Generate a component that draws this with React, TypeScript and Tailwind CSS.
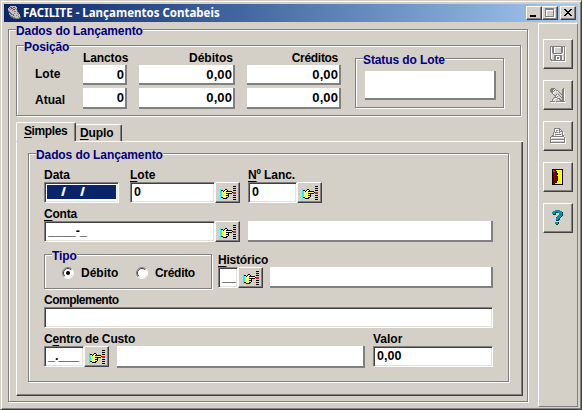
import React from "react";

const palette: Record<string, string> = {
  k: "#000000",
  g: "#808080",
  w: "#ffffff",
  y: "#ffff00",
  l: "#ffff80",
  c: "#00ffff",
  r: "#d02030",
  m: "#800000",
  t: "#0097a7",
  n: "#003c50",
  s: "#c0c0c0",
  d: "#5a5a60",
};

// Draws a bitmap icon, one unit square per character.
function PixelIcon({ rows, emboss = false }: { rows: string[]; emboss?: boolean }) {
  const w = Math.max(...rows.map((r) => r.length));
  const h = rows.length;
  const cells = (dx: number, fill?: string) =>
    rows.flatMap((row, y) =>
      row.split("").map((c, x) =>
        palette[c] ? (
          <rect key={`${dx}-${x}-${y}`} x={x + dx} y={y + dx} width={1} height={1} fill={fill ?? palette[c]} />
        ) : null,
      ),
    );
  return (
    <svg width={w + 1} height={h + 1} viewBox={`0 0 ${w + 1} ${h + 1}`} shapeRendering="crispEdges" className="block shrink-0">
      {emboss && cells(1, "#ffffff")}
      {cells(0)}
    </svg>
  );
}

const hand = [
  "             kkk",
  "                ",
  "             kkk",
  "c    kk         ",
  "ckk kllk     kkk",
  "cclkllkkkkkk    ",
  "cclyllyllllykrrr",
  "ccyllykkkkkk rrr",
  "cclyllylk       ",
  "ccyllykkk    kkk",
  "cclyllylk       ",
  "ckkyllkk     kkk",
  "c  kkkk         ",
  "             kkk",
];

const floppy = [
  "ggggggggggggggg",
  "g gg       gg g",
  "g gg       gg g",
  "g gg       gg g",
  "g gg       gg g",
  "g gg       gg g",
  "g gg       gg g",
  "g  ggggggggg  g",
  "g             g",
  "g   gggggggg  g",
  "g   gg    gg  g",
  "g   gg gg gg  g",
  "g   gg gg gg  g",
  "gg  gg    gg  g",
  " gggggggggggggg",
];

const erase = [
  " gggg        g ",
  "gggg g      gg ",
  "ggg g gg    gg ",
  "gggg    g   gg ",
  " gg      g  gg ",
  "  g       g gg ",
  "   g  g g  ggg ",
  "    gg   g  gg ",
  "     g g  g gg ",
  "    ggg    ggg ",
  "   g   ggg  gg ",
  "  g      gg gg ",
  "  g       gggg ",
  "ggggg ggggggggg",
];

const printer = [
  "    gggggg     ",
  "    g    gg    ",
  "    g gg g g   ",
  "    g    gggg  ",
  "   g ggg g  g  ",
  "   g        g  ",
  "   g gggggg g  ",
  "  gg        gg ",
  " ggggggggggggg ",
  "g             g",
  "g             g",
  "ggggggggggggggg",
  "g             g",
  "g             g",
  "ggggggggggggggg",
];

const door = [
  "kkkkkkkkkkk",
  "ktmkyyyyyyk",
  "kttmkyyyyyk",
  "kmmmkyyyyyk",
  "kmmmmkyyyyk",
  "kmmmmkyyyyk",
  "kmmmmyyyyyk",
  "kmmmmkyyyyk",
  "kmmmmkyyyyk",
  "kmmmmkyyyyk",
  "kmmmmkyyyyk",
  "kmmmmkyyyyk",
  "kmmmkyyyyyk",
  "kmmkkyyyyyk",
  "kmkyyyyyyyk",
  "kkkkkkkkkkk",
];

const help = [
  "   ttttt   ",
  " ttttttttt ",
  "tttnnnttttn",
  "tttn   tttn",
  " nnn   tttn",
  "      ttttn",
  "     ttttn ",
  "    ttttn  ",
  "    tttn   ",
  "    ttnn   ",
  "    nnn    ",
  "           ",
  "   tttn    ",
  "   tttn    ",
  "    nn     ",
];

const books = [
  "  ssssss     ",
  " srrsrrss    ",
  "sgsrrssgs    ",
  "ssgssrrsg    ",
  "gsssgssssd   ",
  "dgssssggsd   ",
  " dgsssssssd  ",
  " sdgssgssgs  ",
  " gsdggssssgs ",
  "  gssdssgsss ",
  "  dggsssssgsd",
  "   ddggssssgd",
  "     dddgggd ",
];

const raised = "border border-t-white border-l-white border-r-[#404040] border-b-[#404040] shadow-[inset_-1px_-1px_0_#808080]";

function Group({ title, className, children }: { title: string; className: string; children?: React.ReactNode }) {
  return (
    <section className={`relative border border-[#808080] shadow-[1px_1px_0_#fff,inset_1px_1px_0_#fff] ${className}`}>
      <h2 className="absolute -top-[6px] left-[7px] h-[14px] bg-[#d4d0c8] leading-[14px] tracking-[-0.1px] text-[#000080]">{title}</h2>
      {children}
    </section>
  );
}

function Label({ hot, before = "", after, className = "" }: { hot?: string; before?: string; after: string; className?: string }) {
  return (
    <div className={`h-[14px] leading-[14px] ${className}`}>
      {before}
      {hot && <span className="underline decoration-1 underline-offset-2">{hot}</span>}
      {after}
    </div>
  );
}

function ReadOnly({ value = "", className }: { value?: string; className: string }) {
  return (
    <div className={`border-r-2 border-b-2 border-[#808080] bg-white pr-px text-right text-[13px] tracking-[0.1px] ${className}`}>{value}</div>
  );
}

function Field({ children, className }: { children?: React.ReactNode; className: string }) {
  return (
    <div className={`h-[21px] border border-t-[#808080] border-l-[#808080] border-r-white border-b-white bg-white pl-[3px] text-[12.5px] leading-[18px] whitespace-pre shadow-[inset_1px_1px_0_#404040,inset_-1px_-1px_0_#e4e1da] ${className}`}>
      {children}
    </div>
  );
}

function Lookup() {
  return (
    <button className={`flex h-[21px] w-[25px] shrink-0 pt-[3px] pl-[4px] ${raised}`}>
      <PixelIcon rows={hand} />
    </button>
  );
}

function ToolButton({ rows, emboss }: { rows: string[]; emboss?: boolean }) {
  return (
    <button className={`flex h-[30px] w-[30px] items-center justify-center ${raised}`}>
      <PixelIcon rows={rows} emboss={emboss} />
    </button>
  );
}

function Radio({ checked = false }: { checked?: boolean }) {
  return (
    <svg width="12" height="12" viewBox="0 0 12 12" className="shrink-0">
      <circle cx="6" cy="6" r="5" fill="#fff" />
      <path d="M2.1 9.9A5.5 5.5 0 0 1 9.9 2.1" fill="none" stroke="#808080" />
      <path d="M2.8 9.2A4.5 4.5 0 0 1 9.2 2.8" fill="none" stroke="#404040" />
      <path d="M2.1 9.9A5.5 5.5 0 0 0 9.9 2.1" fill="none" stroke="#fff" />
      {checked && <circle cx="6" cy="6" r="2" fill="#000" />}
    </svg>
  );
}

function TitleButton({ className = "", children }: { className?: string; children: React.ReactNode }) {
  return (
    <button className={`h-[14px] bg-[#d4d0c8] ${raised} ${className}`}>
      <svg width="13" height="12" viewBox="0 0 13 12" shapeRendering="crispEdges" className="block">
        {children}
      </svg>
    </button>
  );
}

export default function App() {
  return (
    <main className="h-[410px] w-[582px] overflow-hidden border border-t-[#d4d0c8] border-l-[#d4d0c8] border-r-[#404040] border-b-[#404040] bg-[#d4d0c8] p-[3px] font-['Liberation_Sans',Arial,sans-serif] text-[12px] font-bold text-black shadow-[inset_1px_1px_0_#fff,inset_-1px_-1px_0_#808080]">
      <header className="flex h-[18px] items-center bg-linear-to-r from-[#0a246a] to-[#a6caf0] pr-[2px] pl-[4px]">
        <PixelIcon rows={books} />
        <h1 className="ml-[1px] flex-1 font-['Noto_Sans',sans-serif] text-[11.5px] leading-[18px] whitespace-nowrap text-white">
          FACILITE - Lançamentos Contabeis
        </h1>
        <TitleButton className="w-[16px]">
          <rect x="3" y="8" width="6" height="2" fill="#000" />
        </TitleButton>
        <TitleButton className="mr-[2px] w-[16px]">
          <path d="M3.5 2.5h8v8h-8zM3 3.5h8" fill="none" stroke="#fff" />
          <path d="M2.5 1.5h8v8h-8zM2 2.5h9" fill="none" stroke="#808080" />
        </TitleButton>
        <TitleButton className="w-[16px]">
          <path d="M3 2h2v1h1v1h2V3h1V2h2v1h-1v1H9v1H8v1h1v1h1v1h1v1H9V8H8V7H6v1H5v1H3V8h1V7h1V6h1V5H5V4H4V3H3z" fill="#000" />
        </TitleButton>
      </header>

      <div className="flex justify-between">
        <Group title="Dados do Lançamento" className="mt-[7px] ml-[4px] h-[373px] w-[520px] pt-[15px] pl-[7px]">
          <Group title="Posição" className="flex h-[71px] w-[505px]">
            <div className="w-[66px] pt-[21px] pl-[18px]">
              <div className="h-[26px] leading-[14px]">Lote</div>
              <div className="leading-[14px]">Atual</div>
            </div>
            <div className="w-[44px] pt-[5px]">
              <Label after="Lanctos" className="-mr-px tracking-[-0.1px]" />
              <ReadOnly value="0" className="h-[20px] leading-[19px]" />
              <ReadOnly value="0" className="mt-[3px] h-[21px] leading-[20px]" />
            </div>
            <div className="ml-[12px] w-[96px] pt-[5px]">
              <Label after="Débitos" className="pr-[2px] text-right" />
              <ReadOnly value="0,00" className="h-[20px] leading-[19px]" />
              <ReadOnly value="0,00" className="mt-[3px] h-[21px] leading-[20px]" />
            </div>
            <div className="ml-[12px] w-[94px] pt-[5px]">
              <Label after="Créditos" className="pr-[3px] text-right tracking-[-0.3px]" />
              <ReadOnly value="0,00" className="h-[20px] leading-[19px]" />
              <ReadOnly value="0,00" className="mt-[3px] h-[21px] leading-[20px]" />
            </div>
            <Group title="Status do Lote" className="mt-[12px] ml-[14px] h-[50px] w-[149px] pt-[12px] pl-[9px]">
              <ReadOnly className="h-[29px] w-[131px]" />
            </Group>
          </Group>

          <div className="mt-[6px] flex h-[19px] items-end">
            <div className="h-[19px] w-[60px] rounded-t-[2px] border-t border-r border-l border-t-white border-r-[#404040] border-l-white pt-px pl-[7px] leading-[14px] tracking-[-0.4px] shadow-[inset_-1px_0_0_#808080]">
              <Label hot="S" after="imples" />
            </div>
            <div className="h-[17px] w-[46px] rounded-tr-[2px] border-t border-r border-t-white border-r-[#404040] pt-px pl-[4px] leading-[14px] tracking-[-0.1px] shadow-[inset_-1px_0_0_#808080]">
              <Label hot="D" after="uplo" />
            </div>
          </div>
          <div className="flex">
            <div className="h-px w-[59px] bg-[#d4d0c8]" />
            <div className="h-px w-[448px] bg-white" />
          </div>
          <div className="h-[254px] w-[507px] border-r border-b border-l border-r-[#404040] border-b-[#404040] border-l-white pt-[11px] pl-[11px] shadow-[inset_-1px_-1px_0_#808080]">
            <Group title="Dados do Lançamento" className="h-[229px] w-[481px] pt-[14px] pl-[15px]">
              <div className="flex">
                <div className="w-[86px]">
                  <Label after="Data" />
                  <Field className="w-[75px] pt-[2px] !pl-[2px]">
                    <div className="h-[14px] w-[69px] bg-[#0a246a] pl-[14px] text-[12px] leading-[14px] text-white">
                      <span className="inline-block w-[19px] origin-left scale-x-150">/</span>
                      <span className="inline-block origin-left scale-x-150">/</span>
                    </div>
                  </Field>
                </div>
                <div>
                  <Label hot="L" after="ote" />
                  <div className="flex">
                    <Field className="w-[85px]">0</Field>
                    <Lookup />
                  </div>
                </div>
                <div className="ml-[8px]">
                  <Label hot="N" after="º Lanc." className="tracking-[-0.1px]" />
                  <div className="flex">
                    <Field className="w-[49px]">0</Field>
                    <Lookup />
                  </div>
                </div>
              </div>
              <Label hot="C" after="onta" className="mt-[4px] tracking-[-0.2px]" />
              <div className="flex">
                <Field className="w-[171px]">____-_</Field>
                <Lookup />
                <ReadOnly className="ml-[8px] h-[21px] w-[245px]" />
              </div>
              <div className="mt-[11px] flex">
                <Group title="Tipo" className="mt-[1px] flex h-[35px] w-[168px] items-center pt-[3px] pl-[17px]">
                  <Radio checked />
                  <span className="ml-[7px] w-[55px]">Débito</span>
                  <Radio />
                  <span className="ml-[7px] tracking-[-0.3px]">Crédito</span>
                </Group>
                <div className="ml-[6px]">
                  <Label hot="H" after="istórico" className="tracking-[-0.2px]" />
                  <div className="flex">
                    <Field className="w-[20px]">__</Field>
                    <Lookup />
                    <ReadOnly className="ml-[7px] h-[21px] w-[223px]" />
                  </div>
                </div>
              </div>
              <Label after="Complemento" className="mt-[4px] tracking-[-0.5px]" />
              <Field className="w-[449px]" />
              <div className="mt-[4px] flex">
                <div className="w-[329px]">
                  <Label before="C" hot="e" after="ntro de Custo" className="tracking-[-0.15px]" />
                  <div className="flex">
                    <Field className="w-[40px]">_.___</Field>
                    <Lookup />
                    <ReadOnly className="ml-[8px] h-[22px] w-[248px]" />
                  </div>
                </div>
                <div>
                  <Label after="Valor" />
                  <Field className="w-[120px]">0,00</Field>
                </div>
              </div>
            </Group>
          </div>
        </Group>

        <aside className="mt-px flex h-[384px] w-[40px] flex-col gap-[11px] border border-t-white border-l-white border-r-[#808080] border-b-[#808080] pt-[15px] pl-[4px]">
          <ToolButton rows={floppy} emboss />
          <ToolButton rows={erase} emboss />
          <ToolButton rows={printer} emboss />
          <ToolButton rows={door} />
          <ToolButton rows={help} />
        </aside>
      </div>
    </main>
  );
}
